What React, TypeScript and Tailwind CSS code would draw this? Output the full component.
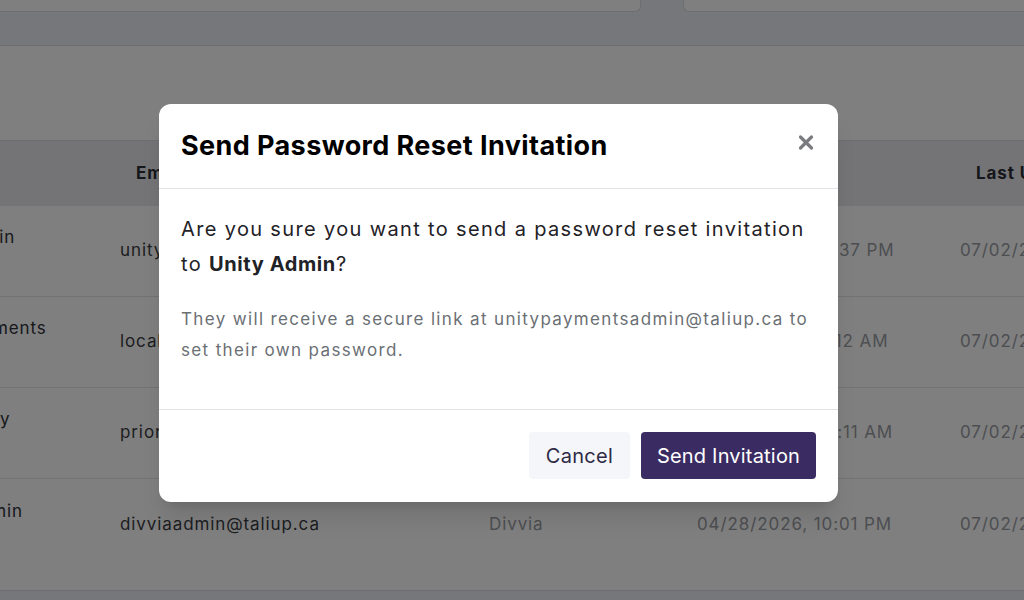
import React from "react";

type Row = {
  name: string;
  email: string;
  org: string;
  created: string;
  updated: string;
};

const rows: Row[] = [
  {
    name: "Unity Admin",
    email: "unitypaymentsadmin@taliup.ca",
    org: "Unity Payments",
    created: "05/14/2026, 03:37 PM",
    updated: "07/02/2026, 09:15 AM",
  },
  {
    name: "Local Payments",
    email: "localpayments@taliup.ca",
    org: "Local Pay",
    created: "05/02/2026, 11:12 AM",
    updated: "07/02/2026, 09:15 AM",
  },
  {
    name: "Priority Pay",
    email: "priorityadmin@taliup.ca",
    org: "Priority",
    created: "04/30/2026, 08:11 AM",
    updated: "07/02/2026, 09:15 AM",
  },
  {
    name: "Divvia Admin",
    email: "divviaadmin@taliup.ca",
    org: "Divvia",
    created: "04/28/2026, 10:01 PM",
    updated: "07/02/2026, 09:15 AM",
  },
];

function CloseIcon() {
  return (
    <svg width="16" height="17" viewBox="0 0 16 17" fill="none">
      <path
        d="M2.5 3 L13.5 14 M13.5 3 L2.5 14"
        stroke="currentColor"
        strokeWidth="3.2"
        strokeLinecap="round"
      />
    </svg>
  );
}

export default function App() {
  return (
    <div
      className="relative h-[600px] w-[1024px] overflow-hidden bg-[#eceef4]"
      style={{ fontFamily: "Inter, 'Noto Sans', sans-serif" }}
    >
      {/* Background page */}
      <div className="flex h-[12px] gap-[42px]">
        <div className="-ml-4 h-full w-[657px] rounded-b-md border border-t-0 border-[#dcdde0] bg-white" />
        <div className="h-full flex-1 rounded-bl-md border border-t-0 border-r-0 border-[#dcdde0] bg-white" />
      </div>
      <div className="h-[33px]" />
      <div className="border-y border-[#dcdde0] bg-white pb-[20px]">
        <div className="h-[94px]" />
        <div className="-ml-[113px] w-[1300px] border-t border-[#dcdde0] tracking-[0.9px]">
          {/* Header row */}
          <div className="flex h-[65px] items-center whitespace-nowrap bg-[#e8e9ee] text-[17px] font-bold text-[#2b2f36]">
            <div className="w-[209px] pl-6">Name</div>
            <div className="w-[369px] pl-10">Email</div>
            <div className="w-[208px] pl-10">Organization</div>
            <div className="w-[263px] pl-10">Created Date</div>
            <div className="flex-1 pl-10">Last Updated</div>
          </div>
          {rows.map((r, i) => (
            <div
              key={r.email}
              className={
                "flex h-[91px] items-center whitespace-nowrap text-[17px] " +
                (i < rows.length - 1 ? "border-b border-[#e3e4e8]" : "")
              }
            >
              <div className="w-[209px] pl-5 pb-[26px] text-[#2e3137]">{r.name}</div>
              <div className="w-[369px] pl-6 text-[#3a3d43]">{r.email}</div>
              <div className="w-[208px] pl-6 text-[#9a9da3]">{r.org}</div>
              <div className="w-[263px] pl-6 text-[#9a9da3]">{r.created}</div>
              <div className="flex-1 pl-6 text-[#9a9da3]">{r.updated}</div>
            </div>
          ))}
        </div>
      </div>

      {/* Overlay */}
      <div className="absolute inset-0 bg-black/50" />

      {/* Modal */}
      <div className="absolute left-[159px] top-[104px] w-[679px] rounded-xl bg-white shadow-xl">
        <div className="flex h-[85px] items-center justify-between border-b border-[#e2e3e6] pl-[22px] pr-6">
          <h2 className="text-[27px] font-bold tracking-[0.4px] text-black">
            Send Password Reset Invitation
          </h2>
          <button className="-mt-2 text-[#7a7b7e]">
            <CloseIcon />
          </button>
        </div>
        <div className="px-[22px] pt-[23px] pb-[43px]">
          <p className="text-[20px] leading-[35px] tracking-[1.35px] text-[#1f2227]">
            Are you sure you want to send a password reset invitation to{" "}
            <span className="font-bold tracking-[0.6px]">Unity Admin</span>?
          </p>
          <p className="mt-[22px] text-[17px] leading-[31px] tracking-[1.35px] text-[#6b7075]">
            They will receive a secure link at unitypaymentsadmin@taliup.ca to
            set their own password.
          </p>
        </div>
        <div className="flex justify-end gap-[11px] border-t border-[#e2e3e6] px-[22px] pt-[22px] pb-[23px]">
          <button className="h-[47px] w-[101px] rounded bg-[#f5f6f9] text-[20px] tracking-[0.3px] text-[#2d2a45]">
            Cancel
          </button>
          <button className="h-[47px] w-[175px] rounded bg-[#3a2c62] text-[20px] tracking-[0.2px] text-white">
            Send Invitation
          </button>
        </div>
      </div>
    </div>
  );
}
